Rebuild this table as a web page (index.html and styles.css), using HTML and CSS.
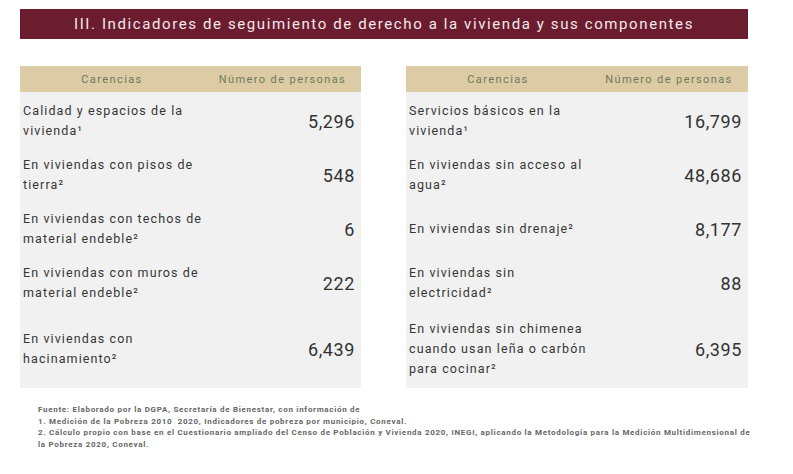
FILE: index.html
```html
<!DOCTYPE html>
<html lang="es">
<head>
<meta charset="utf-8">
<link rel="stylesheet" href="styles.css">
</head>
<body>
<div class="page">
  <div class="title">III. Indicadores de seguimiento de derecho a la vivienda y sus componentes</div>
  <div class="tables">
    <div class="table">
      <div class="head"><div>Carencias</div><div>Número de personas</div></div>
      <div class="body">
        <div class="row"><div class="label">Calidad y espacios de la vivienda¹</div><div class="num">5,296</div></div>
        <div class="row"><div class="label">En viviendas con pisos de tierra²</div><div class="num">548</div></div>
        <div class="row"><div class="label">En viviendas con techos de material endeble²</div><div class="num">6</div></div>
        <div class="row"><div class="label">En viviendas con muros de material endeble²</div><div class="num">222</div></div>
        <div class="row tall"><div class="label narrow">En viviendas con hacinamiento²</div><div class="num">6,439</div></div>
      </div>
    </div>
    <div class="table">
      <div class="head"><div>Carencias</div><div>Número de personas</div></div>
      <div class="body">
        <div class="row"><div class="label">Servicios básicos en la vivienda¹</div><div class="num">16,799</div></div>
        <div class="row"><div class="label">En viviendas sin acceso al agua²</div><div class="num">48,686</div></div>
        <div class="row"><div class="label">En viviendas sin drenaje²</div><div class="num">8,177</div></div>
        <div class="row"><div class="label narrow">En viviendas sin electricidad²</div><div class="num">88</div></div>
        <div class="row tall"><div class="label">En viviendas sin chimenea cuando usan leña o carbón para cocinar²</div><div class="num">6,395</div></div>
      </div>
    </div>
  </div>
  <div class="notes">
    <div>Fuente: Elaborado por la DGPA, Secretaría de Bienestar, con información de</div>
    <div>1. Medición de la Pobreza 2010&nbsp; 2020, Indicadores de pobreza por municipio, Coneval.</div>
    <div>2. Cálculo propio con base en el Cuestionario ampliado del Censo de Población y Vivienda 2020, INEGI, aplicando la Metodología para la Medición Multidimensional de</div>
    <div>la Pobreza 2020, Coneval.</div>
  </div>
</div>
</body>
</html>
```
FILE: styles.css
```css
* { box-sizing: border-box; }
html, body { margin: 0; padding: 0; background: #ffffff; }
body { font-family: Roboto, "Liberation Sans", sans-serif; color: #3a3a3a; }
.page { width: 793px; padding: 9px 45px 0 20px; }
.title {
  height: 30px;
  background: #6b1c2f;
  color: #f3e9ec;
  font-size: 15px;
  letter-spacing: 1.6px;
  text-align: center;
  line-height: 30px;
}
.tables {
  display: grid;
  grid-template-columns: 341px 342px;
  column-gap: 45px;
  margin-top: 27px;
}
.head {
  display: grid;
  grid-template-columns: 184px 1fr;
  height: 26px;
  align-items: center;
  background: #dccba4;
  color: #6e7a5b;
  font-size: 11px;
  letter-spacing: 1.4px;
  text-align: center;
}
.body { background: #f1f1f1; height: 296px; padding-top: 2px; }
.row {
  display: flex;
  align-items: center;
  justify-content: space-between;
  height: 54px;
  padding: 0 6px 0 3px;
}
.row.tall { height: 78px; }
.label {
  width: 180px;
  font-size: 12.5px;
  line-height: 20px;
  letter-spacing: 1.1px;
  color: #363636;
}
.label.narrow { width: 130px; }
.num {
  font-size: 18px;
  letter-spacing: 0.6px;
  color: #333333;
}
.notes {
  margin-top: 16px;
  padding-left: 18px;
  font-size: 8px;
  line-height: 11.7px;
  font-weight: 700;
  letter-spacing: 0.7px;
  color: #666666;
  white-space: nowrap;
}
```
